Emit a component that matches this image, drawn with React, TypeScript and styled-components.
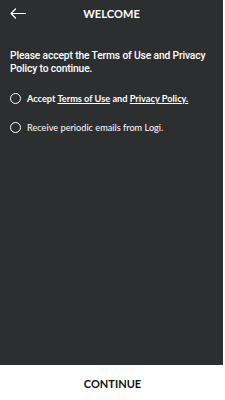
import React from "react";
import styled, { createGlobalStyle } from "styled-components";

const Global = createGlobalStyle`
  html, body { margin: 0; padding: 0; background: #ffffff; }
  body { font-family: "Lato", "Liberation Sans", sans-serif; }
  * { box-sizing: border-box; }
`;

const Screen = styled.div`
  width: 225px;
  height: 400px;
  display: flex;
  flex-direction: column;
  background: #ffffff;
`;

const Panel = styled.div`
  width: 223px;
  height: 365px;
  background: #2d2e30;
  display: flex;
  flex-direction: column;
  color: #ffffff;
`;

const Header = styled.div`
  height: 27px;
  display: grid;
  grid-template-columns: 40px 1fr 40px;
  align-items: center;
`;

const Back = styled.div`
  padding-left: 10px;
  display: flex;
  align-items: center;
`;

const Title = styled.div`
  text-align: center;
  font-weight: 700;
  font-size: 11px;
  letter-spacing: 0.1px;
`;

const Intro = styled.p`
  margin: 22px 0 0 0;
  padding: 0 4px 0 10px;
  font-family: "Roboto", "Liberation Sans", Arial, sans-serif;
  font-size: 10.3px;
  line-height: 13px;
  letter-spacing: -0.15px;
  font-weight: 500;
`;

const Options = styled.div`
  margin-top: 17px;
  display: flex;
  flex-direction: column;
  gap: 16px;
  padding-left: 10px;
`;

const Option = styled.label`
  display: flex;
  align-items: center;
  gap: 6px;
  font-size: 9.2px;
  line-height: 13px;
`;

const Radio = styled.span`
  width: 11px;
  height: 11px;
  border: 1.5px solid #ffffff;
  border-radius: 50%;
  flex: none;
`;

const Link = styled.span`
  text-decoration: underline;
  text-underline-offset: 1px;
`;

const Emph = styled.span<{ $bold?: boolean }>`
  font-weight: ${(p) => (p.$bold ? 700 : 400)};
`;

const Footer = styled.div`
  flex: 1;
  display: flex;
  align-items: center;
  justify-content: center;
  padding-top: 1px;
  font-weight: 700;
  font-size: 11px;
  color: #111111;
`;

export default function App() {
  return (
    <Screen>
      <Global />
      <Panel>
        <Header>
          <Back>
            <svg width="16" height="11" viewBox="0 0 16 11" fill="none">
              <path d="M15.5 5.5H1M5.5 1L1 5.5L5.5 10" stroke="#fff" strokeWidth="1.2" strokeLinecap="round" strokeLinejoin="round" />
            </svg>
          </Back>
          <Title>WELCOME</Title>
          <div />
        </Header>
        <Intro>Please accept the Terms of Use and Privacy Policy to continue.</Intro>
        <Options>
          <Option>
            <Radio />
            <Emph $bold>
              Accept <Link>Terms of Use</Link> and <Link>Privacy Policy.</Link>
            </Emph>
          </Option>
          <Option>
            <Radio />
            <Emph>Receive periodic emails from Logi.</Emph>
          </Option>
        </Options>
      </Panel>
      <Footer>CONTINUE</Footer>
    </Screen>
  );
}
